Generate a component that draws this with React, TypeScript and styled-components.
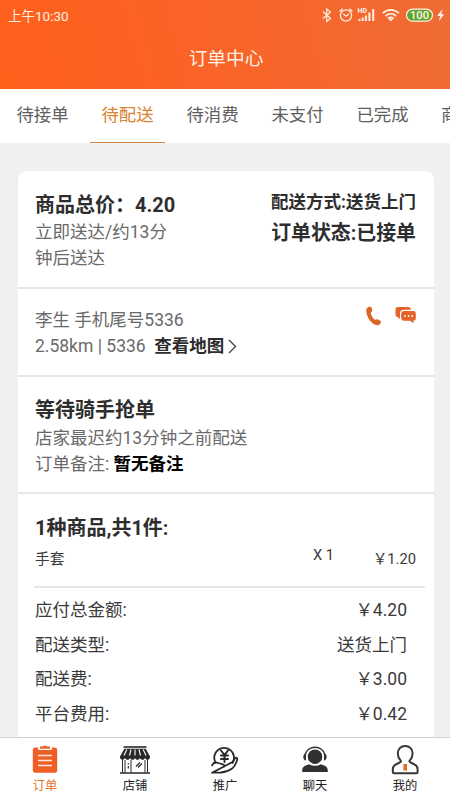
import React from 'react';
import styled, { createGlobalStyle } from 'styled-components';

const Global = createGlobalStyle`
  * { box-sizing: border-box; }
  html, body { margin: 0; padding: 0; overflow: hidden; }
  body { font-family: Roboto, "Noto Sans CJK SC", sans-serif; }
`;

const Screen = styled.div`
  width: 450px;
  height: 800px;
  display: flex;
  flex-direction: column;
  overflow: hidden;
  background: #f0f0f0;
`;

const Header = styled.header`
  flex: none;
  height: 88.5px;
  background: linear-gradient(75deg, #ff5f1b 0%, #f96428 50%, #ef6c35 100%);
  color: #fff1e6;
`;

const StatusBar = styled.div`
  height: 30px;
  padding: 0 4px 0 8px;
  display: flex;
  align-items: center;
  justify-content: space-between;
  font-size: 13.5px;
  svg { display: block; }
`;

const Title = styled.h1`
  margin: 0;
  height: 58px;
  line-height: 58px;
  padding-left: 2px;
  text-align: center;
  font-size: 18.7px;
  font-weight: 400;
`;

const Tabs = styled.nav`
  flex: none;
  height: 54px;
  padding-left: 5px;
  display: flex;
  gap: 10px;
  background: #fff;
  overflow: hidden;
`;

const Tab = styled.div<{ $active?: boolean; $edge?: boolean }>`
  flex: none;
  width: 75px;
  height: 54px;
  line-height: 53px;
  padding-left: ${(p) => (p.$edge ? '11px' : '0')};
  text-align: ${(p) => (p.$edge ? 'left' : 'center')};
  font-size: 17.4px;
  color: ${(p) => (p.$active ? '#d9822f' : '#606060')};
  border-bottom: 1.5px solid ${(p) => (p.$active ? '#cf8a4b' : 'transparent')};
`;

const Body = styled.main`
  flex: 1;
  min-height: 0;
  overflow: hidden;
  padding: 28.5px 16px 0 18px;
`;

const Card = styled.article`
  height: 620px;
  background: #fff;
  border-radius: 9px;
`;

const Section = styled.section<{ $height?: number; $top: number }>`
  height: ${(p) => (p.$height ? `${p.$height}px` : 'auto')};
  padding: ${(p) => p.$top}px 18px 0 17px;
  display: flex;
  justify-content: space-between;
  border-bottom: ${(p) => (p.$height ? '2px solid #e7e7e7' : '0')};
`;

const Column = styled.div<{ $right?: boolean; $grow?: boolean }>`
  text-align: ${(p) => (p.$right ? 'right' : 'left')};
  flex: ${(p) => (p.$grow ? '1' : 'none')};
`;

const Heading = styled.div<{ $h: number }>`
  height: ${(p) => p.$h}px;
  line-height: ${(p) => p.$h}px;
  font-size: 20px;
  font-weight: 700;
  color: #2e2e2e;
  white-space: nowrap;
`;

const Method = styled(Heading)`
  font-size: 17.5px;
`;

const Status = styled(Heading)`
  font-size: 19.9px;
`;

const Text = styled.div`
  height: 26px;
  line-height: 26px;
  font-size: 17.5px;
  color: #6a6a6a;
  white-space: pre;
`;

const Strong = styled.b<{ $dark?: boolean }>`
  color: ${(p) => (p.$dark ? '#000' : '#2c2c2c')};
`;

const Chevron = styled.svg`
  margin-left: 4px;
  vertical-align: -2px;
`;

const Contacts = styled.div`
  display: flex;
  gap: 13px;
  height: 20px;
  margin-top: -1px;
`;

const Item = styled.div`
  display: flex;
  height: 32px;
  line-height: 32px;
  font-size: 14.7px;
  color: #3a3a3a;
`;

const ItemName = styled.span`
  width: 278px;
`;

const Quantity = styled.span`
  line-height: 25px;
`;

const ItemPrice = styled.span`
  flex: 1;
  text-align: right;
`;

const Divider = styled.div`
  height: 1.5px;
  margin: 11px -9px 5.5px -1px;
  background: #e6e6e6;
`;

const FeeRow = styled.div`
  display: flex;
  justify-content: space-between;
  height: 34.7px;
  line-height: 34.7px;
  padding-right: 9px;
  font-size: 17.5px;
  color: #3a3a3a;
`;

const BottomNav = styled.footer`
  flex: none;
  height: 63px;
  display: flex;
  border-top: 1px solid #cfcfcf;
  background: #fff;
`;

const NavItem = styled.div<{ $active?: boolean }>`
  flex: 1;
  padding-top: 6px;
  display: flex;
  flex-direction: column;
  align-items: center;
  font-size: 12.3px;
  line-height: 18px;
  color: ${(p) => (p.$active ? '#e5762e' : '#222')};
  svg { display: block; margin-bottom: 1px; }
`;

const StatusIcons = () => (
  <svg width="124" height="20" viewBox="0 0 124 20" fill="none" stroke="#fff1e6" strokeWidth="1.2">
    <path d="M1 6.5l7.500 7-3.800 3V4l3.800 3L1 13.500" />
    <circle cx="24" cy="10.500" r="5.600" />
    <path d="M21.300 9l2.700 2.300L27 9M17.600 6.500l3-2.800M30.400 6.500l-3-2.800" />
    <path d="M37.500 16v-2M40.700 16v-3.500M43.900 16v-5.500M47.400 16v-8.500M51.200 16V4" strokeWidth="2" />
    <text x="35.500" y="7.800" fontSize="7" fontWeight="700" fontFamily="Roboto" fill="#fff1e6" stroke="none">HD</text>
    <path d="M60.800 8.200c4.800-4.400 11.200-4.400 16 0M63.500 11c3.200-2.900 7.400-2.900 10.600 0M66 13.600c1.800-1.400 3.800-1.400 5.600 0" strokeWidth="1.800" />
    <path d="M66.600 14l2.200 2.600L71 14z" fill="#fff1e6" stroke="none" />
    <rect x="84.500" y="4.200" width="26" height="12" rx="6" fill="#62a52b" />
    <text x="97.500" y="14.200" textAnchor="middle" fontSize="11.200" fontWeight="500" fontFamily="Roboto" fill="#fff8ee" stroke="none">100</text>
    <path d="M120.500 4l-5.300 7h3l-1.500 5.500 5.500-7.300h-3z" fill="#fff1e6" stroke="none" />
  </svg>
);

const PhoneIcon = () => (
  <svg width="16" height="20" viewBox="0 0 16 20" fill="#db6524">
    <path d="M1.100 2.100C2.400.7 4.500.2 5.300 1.300c1 1.300 1.100 3.400.4 4.400-.6.700-1.100 1-.9 1.900.5 2.200 1.800 4.200 3.300 5.700.6.500 1.200.4 2 .1 1.600-.5 3.600.6 4.700 2 .8 1.100-.7 3-2.400 3.600-2.600.8-5.800-1.200-8.200-4.200C1.500 11.500-1.100 5 1.100 2.100z" />
  </svg>
);

const ChatIcon = () => (
  <svg width="21" height="20" viewBox="0 0 21 20" fill="#e5622a">
    <path d="M3 1h10c2 0 3 .8 3 2.800H9C6.300 3.800 5 5 5 7.300v4.500L3.600 13.500v-2C1.200 11 .5 10 .5 8V4C.5 2 1.200 1 3 1z" />
    <path d="M9 5h9c2 0 2.800 1 2.800 2.700v4.200c0 1.600-.8 2.600-2.400 2.700l.1 2.700-3.500-2.600H9c-1.800 0-2.800-1-2.800-2.600V7.600C6.200 6 7.200 5 9 5z" />
    <g fill="#fff"><circle cx="10" cy="10" r=".9" /><circle cx="13.600" cy="10" r=".9" /><circle cx="17.200" cy="10" r=".9" /></g>
  </svg>
);

const OrderIcon = () => (
  <svg width="32" height="32" viewBox="0 0 32 32">
    <path d="M6.300 3.500H9v1.300c0 .8.700 1.300 1.500 1.300h11c.8 0 1.500-.5 1.500-1.300V3.500h2.700a2.500 2.500 0 0 1 2.500 2.500v20.300a2.500 2.500 0 0 1-2.500 2.500H6.300a2.500 2.500 0 0 1-2.500-2.500V6a2.500 2.500 0 0 1 2.500-2.500z" fill="#ee5f25" />
    <path d="M11 2.500h2.500c.6-1 4.400-1 5 0H21v2.300H11z" fill="#ee5f25" />
    <path d="M9 11.500h14M9 16.500h14M9 21.500h14" stroke="#ffe9dd" strokeWidth="1.700" />
  </svg>
);

const ShopIcon = () => (
  <svg width="32" height="32" viewBox="0 0 32 32" fill="none" stroke="#282828">
    <path d="M4.500 2.200h23v1.600h-23z" fill="#282828" stroke="none" />
    <path d="M5.300 4.800h21.400l4.200 7.700H1.100z" fill="#282828" stroke="none" />
    <path d="M7.800 5.500L5 11.500M12 5.500l-1.500 6M16 5.500v6M20 5.500l1.500 6M24.200 5.500l2.800 6" stroke="#fff" strokeWidth="1.100" />
    <path d="M1 12h30v1.300c0 3-4.300 3.300-5 .5-.7 2.700-4.300 2.700-5 0-.7 2.700-4.300 2.700-5 0-.7 2.700-4.300 2.700-5 0-.7 2.700-4.300 2.700-5 0-.7 2.800-5 2.500-5-.5z" fill="#282828" stroke="none" />
    <path d="M3.500 15v13.500M28.500 15v13.500M6 16v12.500M12 16v12.500M26 16v12.500" strokeWidth="1" />
    <path d="M1 29h30" strokeWidth="1.500" />
    <path d="M9.300 19v1.500M9.300 22v2.500M17 22.500l4-4M19 23.500l4-4" strokeWidth="1.200" />
  </svg>
);

const PromoteIcon = () => (
  <svg width="32" height="32" viewBox="0 0 32 32" fill="none" stroke="#292929" strokeWidth="1.800" strokeLinejoin="round" strokeLinecap="round">
    <path d="M6.500 18.500A9.900 9.900 0 1 1 23.500 19" />
    <path d="M12 6.500l3.500 4.500L19 6.500M12 11.500h7M12 15h7M15.500 11v7" strokeWidth="2" />
    <path d="M3 21.500c1-2.500 3.500-3.500 6.300-2.500l4.500 1.300c2.500.8 2 3-.3 2.800M15 22.500l8.500-4.500 2.700-4c1.500-1 2.500.5 1.800 2.200-1 3.500-2 6.300-4.800 8.300-3.500 2.500-7.700 3.700-11.200 4L3 28.700z" />
  </svg>
);

const SupportIcon = () => (
  <svg width="32" height="32" viewBox="0 0 32 32" fill="#303030">
    <circle cx="16" cy="12.700" r="7.300" />
    <path d="M3.200 28v-2c.2-3.200 3-4.800 7-5.800 3.500 2.200 8.100 2.200 11.600 0 4 1 6.800 2.600 7 5.800v2z" />
    <path d="M6.300 10.500C8.600.8 23.400.8 25.700 10.500" fill="none" stroke="#303030" strokeWidth="1.600" />
    <path d="M7 9.200c-3.600.4-3.600 6.900 0 7.300zM25 9.200c3.600.4 3.600 6.900 0 7.300z" />
  </svg>
);

const ProfileIcon = () => (
  <svg width="32" height="32" viewBox="0 0 32 32" fill="none">
    <path d="M16.200 2c-4.600 0-7.400 3.300-7.400 7.400 0 3 1.200 5.200 2.900 7.200.6.900.1 1.400-1 1.900-4.100 1.900-6.900 3-6.900 7v2.600c0 .8.400 1.200 1.200 1.200h22.400c.8 0 1.200-.4 1.200-1.200v-2.600c0-4-2.800-5.100-6.900-7-1.100-.5-1.600-1-1-1.900 1.700-2 2.900-4.200 2.900-7.200C23.600 5.300 20.800 2 16.200 2z" stroke="#373737" strokeWidth="2" />
    <path d="M14.400 20h3.600v6.500h-3.600z" fill="#db6b30" />
  </svg>
);

const tabs = ['待接单', '待配送', '待消费', '未支付', '已完成', '商'];

const fees = [
  ['应付总金额:', '￥4.20'],
  ['配送类型:', '送货上门'],
  ['配送费:', '￥3.00'],
  ['平台费用:', '￥0.42'],
];

const navItems = [
  { label: '订单', Icon: OrderIcon },
  { label: '店铺', Icon: ShopIcon },
  { label: '推广', Icon: PromoteIcon },
  { label: '聊天', Icon: SupportIcon },
  { label: '我的', Icon: ProfileIcon },
];

export default function App() {
  return (
    <Screen lang="zh-CN">
      <Global />
      <Header>
        <StatusBar>
          <span>上午10:30</span>
          <StatusIcons />
        </StatusBar>
        <Title>订单中心</Title>
      </Header>
      <Tabs>
        {tabs.map((t, i) => (
          <Tab key={t} $active={i === 1} $edge={i === tabs.length - 1}>{t}</Tab>
        ))}
      </Tabs>
      <Body>
        <Card>
          <Section $height={118} $top={20}>
            <Column>
              <Heading $h={28}>商品总价：4.20</Heading>
              <Text>立即送达/约13分</Text>
              <Text>钟后送达</Text>
            </Column>
            <Column $right>
              <Method $h={23}>配送方式:送货上门</Method>
              <Status $h={40}>订单状态:已接单</Status>
            </Column>
          </Section>
          <Section $height={88} $top={18}>
            <Column>
              <Text>李生 手机尾号5336</Text>
              <Text>
                2.58km | 5336{'  '}<Strong>查看地图</Strong>
                <Chevron width="9" height="15" viewBox="0 0 9 15" fill="none" stroke="#444" strokeWidth="1.400">
                  <path d="M1 1l6.500 6.500L1 14" />
                </Chevron>
              </Text>
            </Column>
            <Contacts>
              <PhoneIcon />
              <ChatIcon />
            </Contacts>
          </Section>
          <Section $height={117} $top={18}>
            <Column>
              <Heading $h={30}>等待骑手抢单</Heading>
              <Text>店家最迟约13分钟之前配送</Text>
              <Text>订单备注: <Strong $dark>暂无备注</Strong></Text>
            </Column>
          </Section>
          <Section $top={19}>
            <Column $grow>
              <Heading $h={30}>1种商品,共1件:</Heading>
              <Item>
                <ItemName>手套</ItemName>
                <Quantity>X 1</Quantity>
                <ItemPrice>￥1.20</ItemPrice>
              </Item>
              <Divider />
              {fees.map(([label, value]) => (
                <FeeRow key={label}>
                  <span>{label}</span>
                  <span>{value}</span>
                </FeeRow>
              ))}
            </Column>
          </Section>
        </Card>
      </Body>
      <BottomNav>
        {navItems.map(({ label, Icon }, i) => (
          <NavItem key={label} $active={i === 0}>
            <Icon />
            {label}
          </NavItem>
        ))}
      </BottomNav>
    </Screen>
  );
}
